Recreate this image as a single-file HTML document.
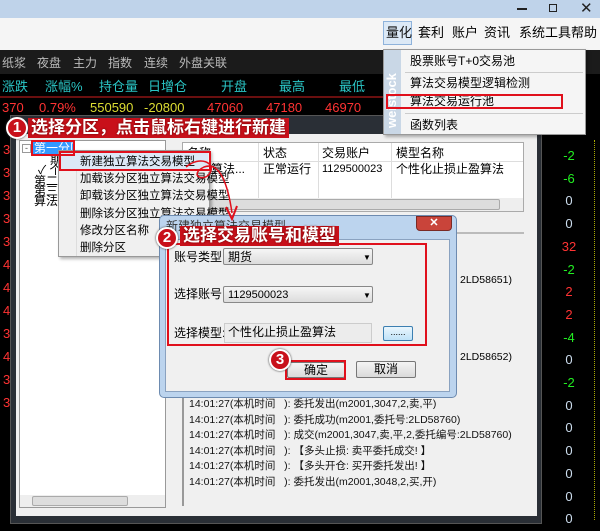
<!DOCTYPE html>
<html><head><meta charset="utf-8"><style>
*{margin:0;padding:0;box-sizing:border-box}
body{width:600px;height:524px;overflow:hidden;position:relative;background:#000;font-family:"Liberation Sans","Noto Sans CJK SC",sans-serif;font-size:12px}
.a{position:absolute;white-space:nowrap}
.t{line-height:14px}
.ann{position:absolute;font-weight:bold;color:#fff;font-size:17px;line-height:20px;white-space:nowrap;background:#c8101a;padding:0 3px;text-shadow:0 0 2px #600}
.circ{position:absolute;width:22px;height:22px;border-radius:50%;background:#c8101a;border:2px solid #fff;color:#fff;font-weight:bold;font-size:15px;line-height:18px;text-align:center;box-shadow:0 0 2px #333}
.rb{position:absolute;border:2px solid #e0101c}
</style></head><body>
<div class="a" style="left:0;top:0;width:600px;height:18px;background:#bfd3ea"></div>
<div class="a" style="left:517px;top:8px;width:10px;height:2px;background:#222"></div>
<div class="a" style="left:549px;top:4px;width:8px;height:8px;border:1.5px solid #222"></div>
<div class="a t" style="left:580px;top:2px;font-size:15px;color:#222">✕</div>
<div class="a" style="left:0;top:18px;width:600px;height:32px;background:#f5f5f5"></div>
<div class="a" style="left:383px;top:21px;width:29px;height:24px;background:#dce9f6;border:1px solid #8fb3db"></div>
<div class="a t" style="left:386px;top:26px;font-size:13px;color:#111">量化</div>
<div class="a t" style="left:418px;top:26px;font-size:13px">套利</div>
<div class="a t" style="left:452px;top:26px;font-size:13px">账户</div>
<div class="a t" style="left:484px;top:26px;font-size:13px">资讯</div>
<div class="a t" style="left:519px;top:26px;font-size:13px">系统工具</div>
<div class="a t" style="left:571px;top:26px;font-size:13px">帮助</div>
<div class="a" style="left:0;top:50px;width:600px;height:24px;background:#1b1b1b"></div>
<div class="a t" style="left:2px;top:56px;color:#bbb">纸浆</div>
<div class="a t" style="left:37px;top:56px;color:#bbb">夜盘</div>
<div class="a t" style="left:73px;top:56px;color:#bbb">主力</div>
<div class="a t" style="left:108px;top:56px;color:#bbb">指数</div>
<div class="a t" style="left:144px;top:56px;color:#bbb">连续</div>
<div class="a t" style="left:179px;top:56px;color:#bbb">外盘关联</div>
<div class="a" style="left:0;top:96px;width:383px;height:2px;background:#6a0f0f"></div>
<div class="a t" style="top:80px;left:2px;font-size:13px;color:#2ac6c6">涨跌</div>
<div class="a t" style="top:80px;left:45px;font-size:13px;color:#2ac6c6">涨幅%</div>
<div class="a t" style="top:80px;left:99px;font-size:13px;color:#2ac6c6">持仓量</div>
<div class="a t" style="top:80px;left:148px;font-size:13px;color:#2ac6c6">日增仓</div>
<div class="a t" style="top:80px;left:221px;font-size:13px;color:#2ac6c6">开盘</div>
<div class="a t" style="top:80px;left:279px;font-size:13px;color:#2ac6c6">最高</div>
<div class="a t" style="top:80px;left:339px;font-size:13px;color:#2ac6c6">最低</div>
<div class="a t" style="top:101px;left:2px;font-size:13px;color:#f33">370</div>
<div class="a t" style="top:101px;left:39px;font-size:13px;color:#f33">0.79%</div>
<div class="a t" style="top:101px;left:90px;font-size:13px;color:#dd3">550590</div>
<div class="a t" style="top:101px;left:144px;font-size:13px;color:#dd3">-20800</div>
<div class="a t" style="top:101px;left:207px;font-size:13px;color:#f33">47060</div>
<div class="a t" style="top:101px;left:266px;font-size:13px;color:#f33">47180</div>
<div class="a t" style="top:101px;left:325px;font-size:13px;color:#f33">46970</div>
<div class="a" style="left:3px;top:138px;color:#f33;font-size:13px;line-height:23px;white-space:pre">3
3
3
3
3
4
4
4
3
4
3
3</div>
<div class="a" style="left:545px;top:145px;width:48px;text-align:center;font-size:13px;line-height:22.7px;white-space:pre"><span style="color:#2e2">-2</span>
<span style="color:#2e2">-6</span>
<span style="color:#cde">0</span>
<span style="color:#cde">0</span>
<span style="color:#f33">32</span>
<span style="color:#2e2">-2</span>
<span style="color:#f33">2</span>
<span style="color:#f33">2</span>
<span style="color:#2e2">-4</span>
<span style="color:#cde">0</span>
<span style="color:#2e2">-2</span>
<span style="color:#cde">0</span>
<span style="color:#cde">0</span>
<span style="color:#cde">0</span>
<span style="color:#cde">0</span>
<span style="color:#cde">0</span>
<span style="color:#cde">0</span></div>
<div class="a" style="left:594px;top:140px;width:1px;height:380px;border-left:1px dotted #aa0"></div>
<div class="a" style="left:10px;top:115px;width:532px;height:409px;background:#2a2f36;border:1px solid #555"></div>
<div class="a" style="left:16px;top:134px;width:521px;height:382px;background:#f0f0f0"></div>
<div class="a t" style="left:90px;top:120px;color:#ccc">模型</div>
<div class="a" style="left:19px;top:140px;width:147px;height:368px;background:#fff;border:1px solid #999"></div>
<div class="a" style="left:20px;top:495px;width:145px;height:12px;background:#eee"></div>
<div class="a" style="left:32px;top:496px;width:96px;height:10px;background:#ddd;border:1px solid #aaa;border-radius:2px"></div>
<div class="a" style="left:22px;top:144px;width:9px;height:9px;border:1px solid #999;font-size:9px;line-height:7px;text-align:center;color:#555">-</div>
<div class="a" style="left:33px;top:141px;width:41px;height:13px;background:#3399ff"></div>
<div class="a t" style="left:34px;top:141px;color:#fff">第一分区</div>
<div class="a t" style="left:50px;top:153px">期</div>
<div class="a t" style="left:38px;top:163px">✓ 个</div>
<div class="a t" style="left:34px;top:176px;line-height:10px">第二分<br>第三分<br>算法交</div>
<div class="a" style="left:182px;top:142px;width:342px;height:70px;background:#fff;border:1px solid #aaa"></div>
<div class="a" style="left:183px;top:143px;width:340px;height:19px;border-bottom:1px solid #ddd"></div>
<div class="a" style="left:258px;top:143px;width:1px;height:55px;background:#ddd"></div>
<div class="a" style="left:318px;top:143px;width:1px;height:55px;background:#ddd"></div>
<div class="a" style="left:391px;top:143px;width:1px;height:55px;background:#ddd"></div>
<div class="a t" style="left:187px;top:146px">名称</div>
<div class="a t" style="left:263px;top:146px">状态</div>
<div class="a t" style="left:322px;top:146px">交易账户</div>
<div class="a t" style="left:396px;top:146px">模型名称</div>
<div class="a t" style="left:187px;top:162px">止盈算法...</div>
<div class="a t" style="left:263px;top:162px">正常运行</div>
<div class="a t" style="left:322px;top:162px;font-size:11px">1129500023</div>
<div class="a t" style="left:396px;top:162px">个性化止损止盈算法</div>
<div class="a" style="left:183px;top:198px;width:340px;height:13px;background:#eee"></div>
<div class="a" style="left:195px;top:199px;width:305px;height:11px;background:#ddd;border:1px solid #aaa;border-radius:2px"></div>
<div class="a" style="left:182px;top:232px;width:342px;height:274px;border-top:2px solid #bbb;border-left:2px solid #999;background:#f0f0f0"></div>
<div class="a" style="left:189px;top:397px;font-size:10.5px;line-height:15.6px;white-space:pre;color:#111">14:01:27(本机时间   ): 委托发出(m2001,3047,2,卖,平)
14:01:27(本机时间   ): 委托成功(m2001,委托号:2LD58760)
14:01:27(本机时间   ): 成交(m2001,3047,卖,平,2,委托编号:2LD58760)
14:01:27(本机时间   ): 【多头止损: 卖平委托成交! 】
14:01:27(本机时间   ): 【多头开仓: 买开委托发出! 】
14:01:27(本机时间   ): 委托发出(m2001,3048,2,买,开)</div>
<div class="a t" style="left:460px;top:273px;font-size:10.5px">2LD58651)</div>
<div class="a t" style="left:460px;top:350px;font-size:10.5px">2LD58652)</div>
<div class="a" style="left:58px;top:150px;width:152px;height:107px;background:#f0f0f0;border:1px solid #999;box-shadow:2px 2px 3px rgba(0,0,0,.3)"></div>
<div class="a" style="left:76px;top:151px;width:1px;height:105px;background:#ddd"></div>
<div class="a" style="left:60px;top:153px;width:148px;height:16px;background:#dce8f6"></div>
<div class="a" style="left:80px;top:154px;font-size:11.5px;line-height:17.2px;white-space:pre">新建独立算法交易模型
加载该分区独立算法交易模型
卸载该分区独立算法交易模型
删除该分区独立算法交易模型
修改分区名称
删除分区</div>
<div class="rb" style="left:59px;top:151px;width:152px;height:20px"></div>
<div class="rb" style="left:31px;top:140px;width:44px;height:16px"></div>
<div class="a" style="left:383px;top:49px;width:203px;height:86px;background:#f5f5f5;border:1px solid #999;box-shadow:2px 2px 3px rgba(0,0,0,.3)"></div>
<div class="a" style="left:384px;top:50px;width:17px;height:84px;background:#c9d7e6"></div>
<div class="a" style="left:385px;top:128px;transform:rotate(-90deg);transform-origin:0 0;color:#fff;font-weight:bold;font-size:13px;line-height:14px">weistock</div>
<div class="a t" style="left:410px;top:54px">股票账号T+0交易池</div>
<div class="a" style="left:405px;top:72px;width:178px;height:1px;background:#ccc"></div>
<div class="a t" style="left:410px;top:76px">算法交易模型逻辑检测</div>
<div class="a t" style="left:410px;top:94px">算法交易运行池</div>
<div class="a" style="left:405px;top:113px;width:178px;height:1px;background:#ccc"></div>
<div class="a t" style="left:410px;top:118px">函数列表</div>
<div class="rb" style="left:386px;top:94px;width:177px;height:15px"></div>
<div class="a" style="left:159px;top:215px;width:298px;height:183px;background:#bcd4ee;border:1px solid #6d8bb0;border-radius:5px"></div>
<div class="a t" style="left:166px;top:219px;color:#333">新建独立算法交易模型</div>
<div class="a" style="left:416px;top:216px;width:36px;height:15px;background:#c9443a;border:1px solid #7a2a25;border-radius:0 0 4px 4px;color:#fff;font-weight:bold;font-size:11px;line-height:13px;text-align:center">✕</div>
<div class="a" style="left:165px;top:239px;width:285px;height:153px;background:#f0f0f0;border:1px solid #8aa2c0"></div>
<div class="a t" style="left:174px;top:250px">账号类型:</div>
<div class="a" style="left:223px;top:248px;width:150px;height:17px;background:linear-gradient(#f6f6f6,#dcdcdc);border:1px solid #888;border-radius:2px"></div>
<div class="a t" style="left:228px;top:250px">期货</div>
<div class="a t" style="left:363px;top:251px;font-size:8px">▼</div>
<div class="a t" style="left:174px;top:287px">选择账号:</div>
<div class="a" style="left:223px;top:286px;width:150px;height:17px;background:linear-gradient(#f6f6f6,#dcdcdc);border:1px solid #888;border-radius:2px"></div>
<div class="a t" style="left:228px;top:288px;font-size:11px">1129500023</div>
<div class="a t" style="left:363px;top:289px;font-size:8px">▼</div>
<div class="a t" style="left:174px;top:326px">选择模型:</div>
<div class="a" style="left:224px;top:323px;width:148px;height:20px;background:#ececec;border:1px solid #ccc"></div>
<div class="a t" style="left:228px;top:325px">个性化止损止盈算法</div>
<div class="a" style="left:383px;top:326px;width:30px;height:15px;background:linear-gradient(#eaf6fd,#bfe2f8);border:1px solid #3c7fb1;border-radius:2px;font-size:9px;line-height:11px;text-align:center">......</div>
<div class="rb" style="left:167px;top:243px;width:260px;height:103px"></div>
<div class="a" style="left:287px;top:362px;width:58px;height:16px;background:linear-gradient(#f4f4f4,#dadada);border:1px solid #777;border-radius:2px;text-align:center;line-height:14px">确定</div>
<div class="a" style="left:356px;top:361px;width:60px;height:17px;background:linear-gradient(#f4f4f4,#dadada);border:1px solid #777;border-radius:2px;text-align:center;line-height:15px">取消</div>
<div class="rb" style="left:285px;top:360px;width:61px;height:20px"></div>
<svg class="a" style="left:180px;top:155px" width="80" height="70"><path d="M6 12 C20 0 36 8 30 18 C24 28 8 20 24 12 C40 6 48 30 52 58" fill="none" stroke="#e0101c" stroke-width="1.5"/><path d="M46 52 L52 64 L57 51" fill="none" stroke="#e0101c" stroke-width="2"/></svg>
<div class="ann" style="left:28px;top:118px">选择分区，点击鼠标右键进行新建</div>
<div class="circ" style="left:6px;top:117px">1</div>
<div class="ann" style="left:180px;top:226px">选择交易账号和模型</div>
<div class="circ" style="left:156px;top:227px">2</div>
<div class="circ" style="left:269px;top:349px">3</div>
</body></html>
